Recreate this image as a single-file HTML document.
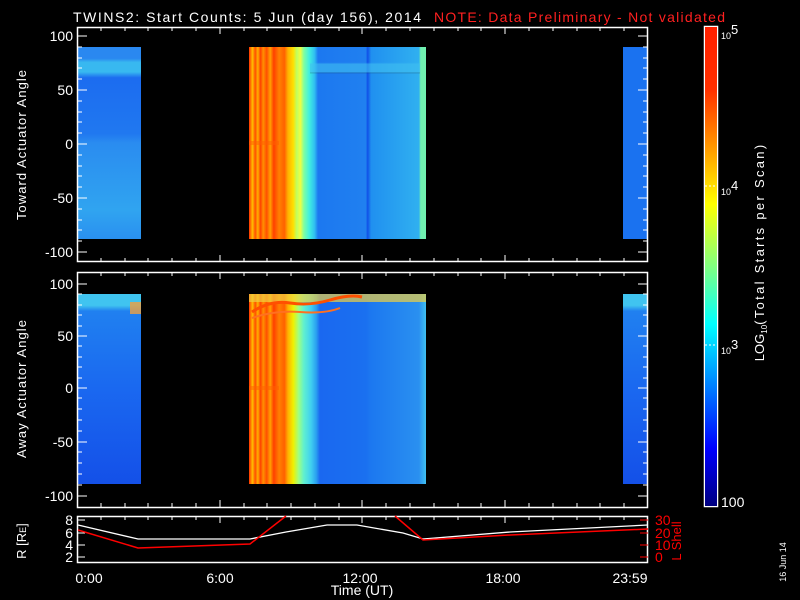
<!DOCTYPE html>
<html><head><meta charset="utf-8"><style>
html,body{margin:0;padding:0;background:#000;width:800px;height:600px;overflow:hidden}
svg{display:block}
text{font-family:"Liberation Sans",sans-serif;fill:#fff}
</style></head><body>
<svg width="800" height="600" viewBox="0 0 800 600" xmlns="http://www.w3.org/2000/svg">
<defs>
<linearGradient id="jet" x1="0" y1="1" x2="0" y2="0">
<stop offset="0" stop-color="#000080"/><stop offset="0.12" stop-color="#0000ff"/>
<stop offset="0.38" stop-color="#00ffff"/><stop offset="0.5" stop-color="#80ff80"/>
<stop offset="0.63" stop-color="#ffff00"/><stop offset="0.87" stop-color="#ff3000"/>
<stop offset="1" stop-color="#ff2000"/>
</linearGradient>
<linearGradient id="b1" x1="0" y1="0" x2="0" y2="1">
<stop offset="0" stop-color="#2a88f0"/><stop offset="0.06" stop-color="#2a88f0"/>
<stop offset="0.08" stop-color="#38b8f0"/><stop offset="0.13" stop-color="#38b8f0"/>
<stop offset="0.16" stop-color="#1c6cf0"/><stop offset="0.45" stop-color="#2078f0"/>
<stop offset="0.5" stop-color="#2a8cf0"/><stop offset="0.85" stop-color="#30a4f0"/>
<stop offset="1" stop-color="#2a90f0"/>
</linearGradient>
<linearGradient id="b2" x1="0" y1="0" x2="0" y2="1">
<stop offset="0" stop-color="#40c4f0"/><stop offset="0.06" stop-color="#40c4f0"/>
<stop offset="0.09" stop-color="#2080f0"/><stop offset="0.5" stop-color="#1a68f0"/>
<stop offset="1" stop-color="#1450e8"/>
</linearGradient>
<linearGradient id="cols" x1="0" y1="0" x2="1" y2="0">
<stop offset="0" stop-color="#ff3000"/><stop offset="0.02" stop-color="#ffc000"/>
<stop offset="0.035" stop-color="#ff5000"/><stop offset="0.05" stop-color="#ffb000"/>
<stop offset="0.065" stop-color="#ff4000"/><stop offset="0.08" stop-color="#ff9000"/>
<stop offset="0.1" stop-color="#ff5000"/><stop offset="0.12" stop-color="#ffa000"/>
<stop offset="0.14" stop-color="#ff4000"/><stop offset="0.17" stop-color="#ff8000"/>
<stop offset="0.2" stop-color="#ff6000"/><stop offset="0.22" stop-color="#ffb000"/>
<stop offset="0.25" stop-color="#ffe000"/><stop offset="0.27" stop-color="#c0ff60"/>
<stop offset="0.29" stop-color="#f0ff40"/><stop offset="0.31" stop-color="#80ffa0"/>
<stop offset="0.34" stop-color="#40f0e0"/><stop offset="0.37" stop-color="#30c0f0"/>
<stop offset="0.39" stop-color="#1c78f0"/>
<stop offset="0.66" stop-color="#2080f0"/><stop offset="0.67" stop-color="#1050e8"/>
<stop offset="0.69" stop-color="#2090f0"/><stop offset="0.96" stop-color="#30b0f0"/>
<stop offset="0.97" stop-color="#70f0b0"/><stop offset="1" stop-color="#70f0b0"/>
</linearGradient>
<linearGradient id="colsB" x1="0" y1="0" x2="1" y2="0">
<stop offset="0" stop-color="#ff3000"/><stop offset="0.02" stop-color="#ffc000"/>
<stop offset="0.035" stop-color="#ff5000"/><stop offset="0.05" stop-color="#ffb000"/>
<stop offset="0.065" stop-color="#ff4000"/><stop offset="0.08" stop-color="#ff9000"/>
<stop offset="0.1" stop-color="#ff5000"/><stop offset="0.12" stop-color="#ffa000"/>
<stop offset="0.14" stop-color="#ff4000"/><stop offset="0.17" stop-color="#ff8000"/>
<stop offset="0.2" stop-color="#ff6000"/><stop offset="0.22" stop-color="#ffb000"/>
<stop offset="0.25" stop-color="#f0f000"/><stop offset="0.28" stop-color="#a0ff80"/>
<stop offset="0.31" stop-color="#60f0d0"/><stop offset="0.35" stop-color="#40d0f0"/>
<stop offset="0.38" stop-color="#2aa0f0"/><stop offset="0.4" stop-color="#1a68f0"/>
<stop offset="0.66" stop-color="#1a70f0"/><stop offset="0.69" stop-color="#1c78f0"/>
<stop offset="0.96" stop-color="#2a90f0"/><stop offset="1" stop-color="#40c0f0"/>
</linearGradient>
<linearGradient id="band" x1="0" y1="0" x2="0" y2="1">
<stop offset="0" stop-color="#000" stop-opacity="0"/><stop offset="0.08" stop-color="#40c0f0" stop-opacity="0"/>
<stop offset="0.09" stop-color="#40c0f0" stop-opacity="0.6"/><stop offset="0.13" stop-color="#40c0f0" stop-opacity="0.6"/>
<stop offset="0.14" stop-color="#000" stop-opacity="0"/><stop offset="1" stop-color="#000" stop-opacity="0"/>
</linearGradient>
</defs>

<text x="73" y="22" font-size="14" textLength="348" lengthAdjust="spacing">TWINS2: Start Counts:  5 Jun (day 156), 2014</text>
<text x="434" y="22" font-size="14" style="fill:#ff2020" textLength="291" lengthAdjust="spacing">NOTE: Data Preliminary - Not validated</text>

<rect x="78" y="47" width="63" height="192" fill="url(#b1)"/>
<rect x="249" y="47" width="177" height="192" fill="url(#cols)"/>
<rect x="310" y="47" width="110" height="192" fill="url(#band)"/>
<rect x="623" y="47" width="25" height="192" fill="#1a72f0"/>
<rect x="249" y="141" width="30" height="4" fill="#ff6000" opacity="0.5"/>
<rect x="78" y="294" width="63" height="190" fill="url(#b2)"/>
<rect x="130" y="302" width="11" height="12" fill="#f0a040" opacity="0.8"/>
<rect x="249" y="294" width="177" height="190" fill="url(#colsB)"/>
<rect x="249" y="294" width="177" height="8" fill="#f0d040" opacity="0.7"/>
<path d="M252 312 Q270 300 290 303 T330 300 T362 297" stroke="#ff5000" stroke-width="3" fill="none"/>
<path d="M252 318 Q275 310 300 312 T340 308" stroke="#ff7020" stroke-width="2" fill="none"/>
<rect x="623" y="294" width="25" height="190" fill="url(#b2)"/>
<rect x="249" y="386" width="30" height="4" fill="#ff6000" opacity="0.5"/>

<g stroke="#fff" stroke-width="1.5" fill="none">
<rect x="77.5" y="27.5" width="570" height="234"/>
<rect x="77.5" y="272.5" width="570" height="235"/>
<rect x="77.5" y="516.5" width="570" height="46"/>
<rect x="704.5" y="26.5" width="13" height="480"/>
</g>
<rect x="705" y="27" width="12" height="479" fill="url(#jet)"/>
<g stroke="#fff" stroke-width="1" stroke-dasharray="2,2">
<line x1="705" y1="186" x2="717" y2="186"/><line x1="705" y1="345" x2="717" y2="345"/>
</g>

<g stroke="#fff" stroke-width="1">
<path d="M77 36h10M77 90h10M77 144h10M77 198h10M77 252h10M638 36h10M638 90h10M638 144h10M638 198h10M638 252h10
M77 47h5M77 58h5M77 68h5M77 79h5M77 101h5M77 112h5M77 122h5M77 133h5M77 155h5M77 166h5M77 176h5M77 187h5M77 209h5M77 220h5M77 230h5M77 241h5
M643 47h5M643 58h5M643 68h5M643 79h5M643 101h5M643 112h5M643 122h5M643 133h5M643 155h5M643 166h5M643 176h5M643 187h5M643 209h5M643 220h5M643 230h5M643 241h5
M77 284h10M77 336h10M77 388h10M77 442h10M77 496h10M638 284h10M638 336h10M638 388h10M638 442h10M638 496h10
M77 294h5M77 305h5M77 315h5M77 326h5M77 346h5M77 357h5M77 367h5M77 378h5M77 398h5M77 409h5M77 420h5M77 431h5M77 452h5M77 463h5M77 474h5M77 485h5
M643 294h5M643 305h5M643 315h5M643 326h5M643 346h5M643 357h5M643 367h5M643 378h5M643 398h5M643 409h5M643 420h5M643 431h5M643 452h5M643 463h5M643 474h5M643 485h5
M77 520h8M77 533h8M77 545h8M77 557h8"/>
<path id="xt" d="M101 27v4M125 27v4M148 27v4M172 27v4M196 27v4M220 27v7M244 27v4M267 27v4M291 27v4M315 27v4M339 27v4M362 27v7M386 27v4M410 27v4M434 27v4M458 27v4M481 27v4M505 27v7M529 27v4M553 27v4M577 27v4M600 27v4M624 27v4
M101 262v-4M125 262v-4M148 262v-4M172 262v-4M196 262v-4M220 262v-7M244 262v-4M267 262v-4M291 262v-4M315 262v-4M339 262v-4M362 262v-7M386 262v-4M410 262v-4M434 262v-4M458 262v-4M481 262v-4M505 262v-7M529 262v-4M553 262v-4M577 262v-4M600 262v-4M624 262v-4"/>
<use href="#xt" y="245"/>
<use href="#xt" y="489"/>
</g>
<path d="M648 520h-8M648 533h-8M648 545h-8M648 557h-8" stroke="#f00"/>

<polyline points="78,525 138,539 250,539 286,532 327,525 357,525 403,533 423,539 510,532 648,525" stroke="#fff" stroke-width="1.3" fill="none"/>
<polyline points="78,530 138,548 250,544 286,516" stroke="#f00" stroke-width="1.5" fill="none"/>
<polyline points="395,516 423,540 510,535 648,529" stroke="#f00" stroke-width="1.5" fill="none"/>

<g font-size="14" text-anchor="end">
<text x="73" y="41">100</text><text x="73" y="95">50</text><text x="73" y="149">0</text><text x="73" y="203">-50</text><text x="73" y="257">-100</text>
<text x="73" y="289">100</text><text x="73" y="341">50</text><text x="73" y="393">0</text><text x="73" y="447">-50</text><text x="73" y="501">-100</text>
<text x="73" y="525">8</text><text x="73" y="538">6</text><text x="73" y="550">4</text><text x="73" y="562">2</text>
</g>
<g font-size="14">
<text x="655" y="525" style="fill:#f00">30</text><text x="655" y="538" style="fill:#f00">20</text><text x="655" y="550" style="fill:#f00">10</text><text x="655" y="562" style="fill:#f00">0</text>
</g>
<g font-size="14" text-anchor="middle">
<text x="89" y="583">0:00</text><text x="220" y="583">6:00</text><text x="360" y="583">12:00</text><text x="503" y="583">18:00</text><text x="630" y="583">23:59</text>
<text x="362" y="595">Time (UT)</text>
<text transform="translate(26,145) rotate(-90)" font-size="13" textLength="150" lengthAdjust="spacing">Toward Actuator Angle</text>
<text transform="translate(26,389) rotate(-90)" font-size="13" textLength="138" lengthAdjust="spacing">Away Actuator Angle</text>
<text transform="translate(26,541) rotate(-90)" font-size="13">R [R<tspan font-size="9">E</tspan>]</text>
<text transform="translate(681,541) rotate(-90)" font-size="13" style="fill:#f00">L Shell</text>
<text transform="translate(764,253) rotate(-90)" font-size="13">LOG<tspan font-size="8" dy="3">10</tspan><tspan dy="-3" textLength="180" lengthAdjust="spacing">(Total Starts per Scan)</tspan></text>
<text transform="translate(786,562) rotate(-90)" font-size="9">16 Jun 14</text>
</g>
<g font-size="9">
<text x="721" y="39">10<tspan font-size="13" dy="-5">5</tspan></text>
<text x="721" y="195">10<tspan font-size="13" dy="-5">4</tspan></text>
<text x="721" y="354">10<tspan font-size="13" dy="-5">3</tspan></text>
</g>
<text x="721" y="507" font-size="14">100</text>
</svg>
</body></html>
